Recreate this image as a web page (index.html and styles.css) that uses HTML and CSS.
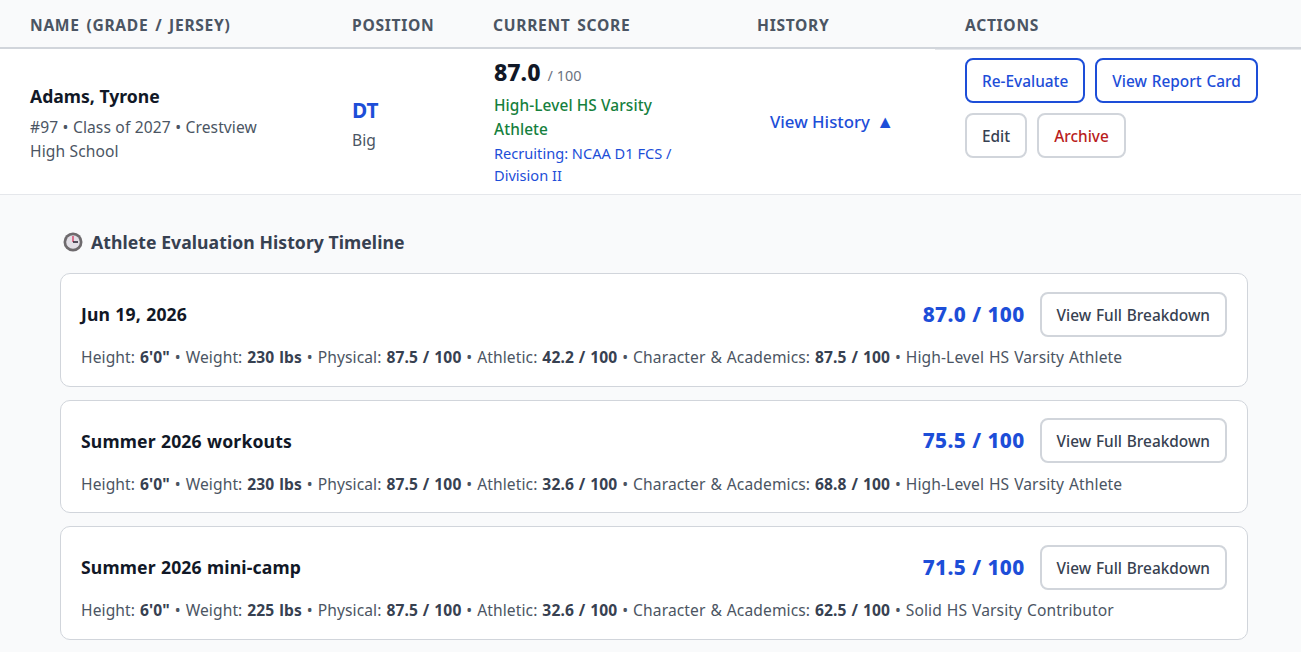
FILE: index.html
```html
<!DOCTYPE html>
<html lang="en">
<head>
<meta charset="utf-8">
<title>Athlete Evaluation History</title>
<link rel="stylesheet" href="styles.css">
</head>
<body>
<table class="roster">
  <colgroup>
    <col class="col-name"><col class="col-pos"><col class="col-score"><col class="col-hist"><col class="col-act">
  </colgroup>
  <thead>
    <tr>
      <th>Name (Grade / Jersey)</th>
      <th>Position</th>
      <th>Current Score</th>
      <th>History</th>
      <th>Actions</th>
    </tr>
  </thead>
  <tbody>
    <tr>
      <td>
        <div class="athlete-name">Adams, Tyrone</div>
        <div class="athlete-meta">#97 • Class of 2027 • Crestview High School</div>
      </td>
      <td>
        <div class="pos">DT</div>
        <div class="pos-group">Big</div>
      </td>
      <td>
        <div class="score"><span class="score-value">87.0</span> <span class="score-max">/ 100</span></div>
        <div class="tier">High-Level HS Varsity Athlete</div>
        <div class="recruit">Recruiting: NCAA D1 FCS / Division II</div>
      </td>
      <td class="history-cell"><a class="history-link">View History <span class="caret">▲</span></a></td>
      <td class="actions-cell">
        <div class="actions">
          <button class="btn btn-primary">Re-Evaluate</button>
          <button class="btn btn-primary">View Report Card</button>
          <button class="btn">Edit</button>
          <button class="btn btn-danger">Archive</button>
        </div>
      </td>
    </tr>
  </tbody>
</table>

<section class="timeline">
  <h3 class="timeline-title">
    <svg class="clock" viewBox="0 0 20 20" aria-hidden="true">
      <circle cx="10" cy="10" r="9.5" fill="#6e6a6d"/>
      <circle cx="10" cy="10" r="6.8" fill="#e2dfe6"/>
      <path d="M10 10V4" stroke="#d6365f" stroke-width="1.3"/>
      <path d="M10 10h5" stroke="#2f2a3a" stroke-width="1.6"/>
    </svg>
    Athlete Evaluation History Timeline
  </h3>

  <article class="card">
    <div class="card-head">
      <div class="card-title">Jun 19, 2026</div>
      <div class="card-right">
        <span class="card-score">87.0 / 100</span>
        <button class="btn btn-wide">View Full Breakdown</button>
      </div>
    </div>
    <div class="card-detail">Height: <b>6'0"</b> • Weight: <b>230 lbs</b> • Physical: <b>87.5 / 100</b> • Athletic: <b>42.2 / 100</b> • Character &amp; Academics: <b>87.5 / 100</b> • High-Level HS Varsity Athlete</div>
  </article>

  <article class="card">
    <div class="card-head">
      <div class="card-title">Summer 2026 workouts</div>
      <div class="card-right">
        <span class="card-score">75.5 / 100</span>
        <button class="btn btn-wide">View Full Breakdown</button>
      </div>
    </div>
    <div class="card-detail">Height: <b>6'0"</b> • Weight: <b>230 lbs</b> • Physical: <b>87.5 / 100</b> • Athletic: <b>32.6 / 100</b> • Character &amp; Academics: <b>68.8 / 100</b> • High-Level HS Varsity Athlete</div>
  </article>

  <article class="card">
    <div class="card-head">
      <div class="card-title">Summer 2026 mini-camp</div>
      <div class="card-right">
        <span class="card-score">71.5 / 100</span>
        <button class="btn btn-wide">View Full Breakdown</button>
      </div>
    </div>
    <div class="card-detail">Height: <b>6'0"</b> • Weight: <b>225 lbs</b> • Physical: <b>87.5 / 100</b> • Athletic: <b>32.6 / 100</b> • Character &amp; Academics: <b>62.5 / 100</b> • Solid HS Varsity Contributor</div>
  </article>
</section>
</body>
</html>
```
FILE: styles.css
```css
* { box-sizing: border-box; }
html, body { margin: 0; padding: 0; }
body {
  width: 1301px;
  height: 652px;
  overflow: hidden;
  background: #f9fafb;
  font-family: "Noto Sans", sans-serif;
  color: #374151;
}
.roster {
  width: 1301px;
  border-collapse: separate;
  border-spacing: 0;
  table-layout: fixed;
}
.col-name { width: 322px; }
.col-pos { width: 141px; }
.col-score { width: 264px; }
.col-hist { width: 208px; }
.col-act { width: 366px; }
th {
  height: 49px;
  padding: 2px 0 0 30px;
  text-align: left;
  font-size: 15.6px;
  font-weight: 700;
  letter-spacing: 0.7px;
  word-spacing: 2px;
  text-transform: uppercase;
  color: #4b5563;
  background: #f9fafb;
  border-bottom: 2px solid #d1d5db;
}
td {
  height: 146px;
  padding: 0 0 0 30px;
  background: #fff;
  border-bottom: 1px solid #e5e7eb;
  vertical-align: middle;
}
.athlete-name { font-size: 17.6px; font-weight: 700; color: #111827; line-height: 24px; margin-bottom: 7px; padding-top: 4px; }
.athlete-meta { font-size: 15.6px; line-height: 24px; color: #4b5563; width: 240px; letter-spacing: 0.08px; word-spacing: 0.3px; }
.pos { font-size: 20.8px; font-weight: 700; color: #1d4ed8; line-height: 28px; padding-top: 5px; }
.pos-group { font-size: 15.6px; line-height: 24px; color: #4b5563; padding-top: 4px; }
.score { line-height: 30px; padding-left: 1px; }
.score-value { font-size: 23px; font-weight: 800; color: #111827; }
.score-max { font-size: 14.4px; color: #6b7280; margin-left: 3px; }
.tier { font-size: 15.4px; font-weight: 500; letter-spacing: 0.1px; line-height: 24px; color: #15803d; width: 180px; padding: 3px 0 0 1px; }
.recruit { font-size: 14.6px; line-height: 22px; color: #1d4ed8; width: 190px; padding-left: 1px; }
.history-cell { padding-bottom: 2px; }
.history-link { font-size: 16.8px; font-weight: 500; color: #1d4ed8; margin-left: 13px; }
.caret { font-size: 18px; margin-left: 2px; }
.actions-cell { vertical-align: top; padding-top: 8px; border-top: 1px solid #e5e7eb; }
.actions { display: flex; flex-wrap: wrap; gap: 10px; width: 310px; }
.btn {
  font-family: inherit;
  font-size: 15.4px;
  font-weight: 500;
  word-spacing: 0.8px;
  height: 45px;
  padding: 2px 15px 0;
  background: #fff;
  color: #374151;
  border: 2px solid #d1d5db;
  border-radius: 8px;
}
.btn-primary { color: #1d4ed8; border-color: #1d4ed8; }
.btn-danger { color: #b91c1c; }
.timeline { padding: 33px 53px 0 60px; }
.timeline-title {
  display: flex;
  align-items: center;
  gap: 8px;
  margin: 0 0 17px 3px;
  font-size: 17.6px;
  line-height: 28px;
  font-weight: 700;
  color: #374151;
  letter-spacing: 0.06px;
}
.clock { width: 20px; height: 20px; flex: none; }
.card {
  height: 113.8px;
  margin-bottom: 12.8px;
  padding: 17.6px 20px 0;
  background: #fff;
  border: 1px solid #d1d5db;
  border-radius: 10px;
}
.card-head { display: flex; justify-content: space-between; align-items: center; }
.card-title { font-size: 17.6px; font-weight: 700; letter-spacing: 0.15px; word-spacing: 0.5px; color: #111827; }
.card-right { display: flex; align-items: center; gap: 15px; }
.card-score { font-size: 20.8px; font-weight: 800; letter-spacing: 0.3px; word-spacing: 0.5px; color: #1d4ed8; padding-bottom: 1px; }
.card-detail { margin-top: 8.4px; font-size: 15.6px; letter-spacing: 0.1px; word-spacing: 0.75px; line-height: 24px; color: #4b5563; }
.card-detail b { font-weight: 700; color: #374151; }
```
